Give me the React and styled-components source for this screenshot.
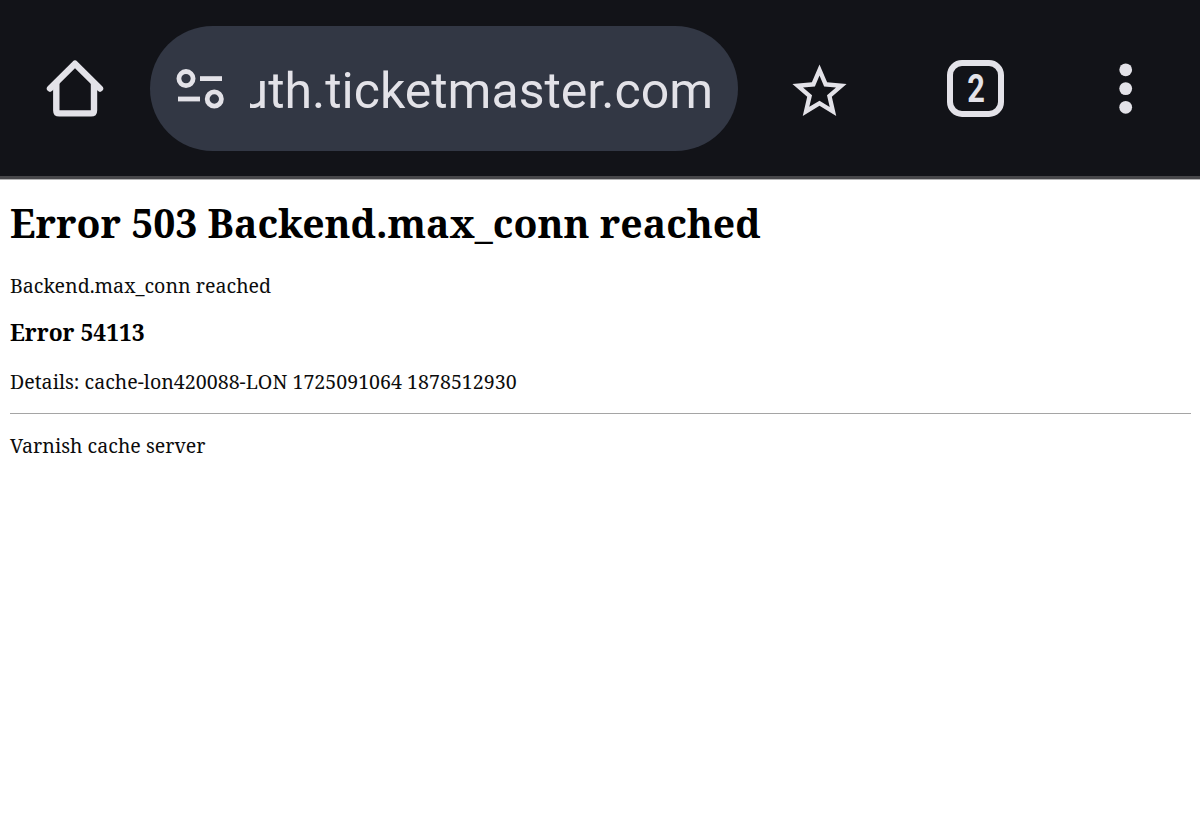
import React from 'react';
import styled, { createGlobalStyle } from "styled-components";

const GlobalStyle = createGlobalStyle`
  body {
    margin: 0;
    background: #ffffff;
  }
`;

function App() {
  return (
    <>
      <GlobalStyle />
      <Toolbar>
        <HomeIcon viewBox="0 0 60 60">
          <path d="M5 28.5 L30 3.7 L55 28.5" />
          <path d="M11.3 24 V50.4 Q11.3 53.4 14.3 53.4 H46 Q49 53.4 49 50.4 V24" />
        </HomeIcon>

        <AddressBar>
          <SiteIcon viewBox="0 0 48 40">
            <circle cx="10" cy="9.6" r="7.1" />
            <path d="M24 9.6 H46" />
            <path d="M2 30 H24" />
            <circle cx="38.3" cy="30" r="7.1" />
          </SiteIcon>
          <Url>
            <span>uth.ticketmaster.com</span>
          </Url>
        </AddressBar>

        <StarIcon viewBox="0 0 24 24">
          <path d="M22 9.24l-7.19-.62L12 2 9.19 8.63 2 9.24l5.46 4.73L5.82 21 12 17.27 18.18 21l-1.63-7.03L22 9.24zM12 15.4l-3.76 2.27 1-4.28-3.32-2.88 4.38-.38L12 6.1l1.71 4.04 4.38.38-3.32 2.88 1 4.28L12 15.4z" />
        </StarIcon>

        <Tabs>
          <span>2</span>
        </Tabs>

        <MenuIcon viewBox="0 0 14 52">
          <circle cx="6.7" cy="6.8" r="6.4" />
          <circle cx="6.7" cy="25.6" r="6.4" />
          <circle cx="6.7" cy="44.3" r="6.4" />
        </MenuIcon>
      </Toolbar>

      <Page>
        <Title>Error 503 Backend.max_conn reached</Title>
        <Text>Backend.max_conn reached</Text>
        <SubTitle>Error 54113</SubTitle>
        <Details>Details: cache-lon420088-LON 1725091064 1878512930</Details>
        <Line />
        <Text>Varnish cache server</Text>
      </Page>
    </>
  );
}

export default App;

const Toolbar = styled.div`
  display: flex;
  align-items: flex-start;
  box-sizing: border-box;
  height: 179px;
  background: #121318;
  border-bottom: 3px solid #47474a;
`;

const HomeIcon = styled.svg`
  flex: none;
  width: 60px;
  height: 60px;
  margin: 60px 0 0 45px;
  fill: none;
  stroke: #e3e2e8;
  stroke-width: 6.4;
  stroke-linecap: round;
  stroke-linejoin: round;
`;

const AddressBar = styled.div`
  display: flex;
  align-items: center;
  flex: none;
  box-sizing: border-box;
  width: 588px;
  height: 125px;
  margin: 26px 0 0 45px;
  padding: 0 25px 0 26px;
  border-radius: 63px;
  background: #323744;
`;

const SiteIcon = styled.svg`
  flex: none;
  width: 48px;
  height: 40px;
  fill: none;
  stroke: #e3e2e8;
  stroke-width: 4.8;
`;

const Url = styled.div`
  display: flex;
  justify-content: flex-end;
  overflow: hidden;
  width: 463px;
  margin-left: 26px;
  padding-top: 5px;
  color: #e3e2e8;
  font-family: Roboto, sans-serif;
  font-size: 50px;
  line-height: 64px;
  white-space: nowrap;
`;

const StarIcon = styled.svg`
  flex: none;
  width: 65px;
  height: 65px;
  margin: 59px 0 0 49px;
  fill: #e3e2e8;
`;

const Tabs = styled.div`
  display: flex;
  align-items: center;
  justify-content: center;
  flex: none;
  box-sizing: border-box;
  width: 57px;
  height: 57px;
  margin: 60px 0 0 95px;
  border: 6.5px solid #e3e2e8;
  border-radius: 15px;
  color: #e3e2e8;
  font-family: Roboto, sans-serif;
  font-size: 38.5px;
  font-weight: 700;
  line-height: 44px;

  span {
    margin-left: 1px;
    transform: scaleX(0.8);
  }
`;

const MenuIcon = styled.svg`
  flex: none;
  width: 14px;
  height: 52px;
  margin: 63px 0 0 115px;
  fill: #e3e2e8;
`;

const Page = styled.div`
  padding: 15px 9px 0 10px;
  border-top: 1px solid #b4b4b5;
  color: #000000;
  font-family: "Noto Serif", "Droid Serif", "DejaVu Serif Condensed", "DejaVu Serif", serif;
`;

const Title = styled.h1`
  margin: 0;
  font-size: 39.14px;
  line-height: 56px;
  white-space: nowrap;
`;

const Text = styled.p`
  margin: 0;
  padding: 21px 0 0;
  color: #0c0c0c;
  font-size: 19.6px;
  line-height: 28px;
`;

const Details = styled(Text)`
  padding-top: 20px;
`;

const SubTitle = styled.h3`
  margin: 0;
  padding: 18px 0 0;
  font-size: 22.75px;
  line-height: 30px;
`;

const Line = styled.hr`
  height: 1px;
  margin: 17px 0 -3px;
  border: none;
  background: #a5a5a5;
`;
